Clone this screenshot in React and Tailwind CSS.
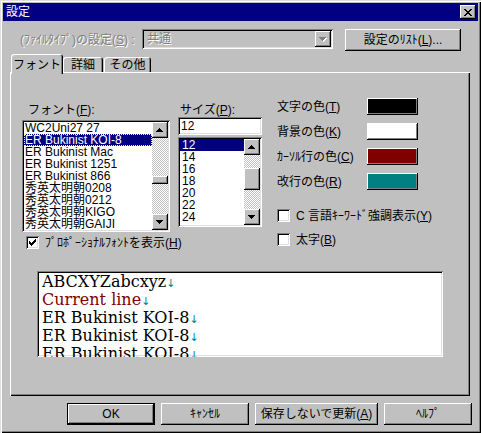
import React from 'react';

const raised = 'shadow-[inset_-1px_-1px_0_#000,inset_1px_1px_0_#fff,inset_-2px_-2px_0_#808080]';
const sunken = 'shadow-[inset_1px_1px_0_#808080,inset_-1px_-1px_0_#fff,inset_2px_2px_0_#000,inset_-2px_-2px_0_#dfdfdf]';
const dither = 'bg-[image:conic-gradient(#fff_25%,#c0c0c0_0_50%,#fff_0_75%,#c0c0c0_0)] bg-[length:2px_2px]';
const grey = 'text-[#808080] [text-shadow:1px_1px_0_#fff]';

const FONTS = [
  'WC2Uni27 27',
  'ER Bukinist KOI-8',
  'ER Bukinist Mac',
  'ER Bukinist 1251',
  'ER Bukinist 866',
  '秀英太明朝0208',
  '秀英太明朝0212',
  '秀英太明朝KIGO',
  '秀英太明朝GAIJI',
];
const SIZES = ['12', '14', '16', '18', '20', '22', '24'];

const COLORS = [
  { label: '文字の色', key: 'T', color: 'bg-black' },
  { label: '背景の色', key: 'K', color: 'bg-white' },
  { label: 'ｶｰｿﾙ行の色', key: 'C', color: 'bg-[#800000]' },
  { label: '改行の色', key: 'R', color: 'bg-[#008080]' },
];

function Arrow({ dir = 'down', disabled }) {
  const d =
    dir === 'up'
      ? 'M3 0h1v1H3zM2 1h3v1H2zM1 2h5v1H1zM0 3h7v1H0z'
      : 'M0 0h7v1H0zM1 1h5v1H1zM2 2h3v1H2zM3 3h1v1H3z';
  return (
    <svg width="8" height="5" viewBox="0 0 8 5" shapeRendering="crispEdges">
      {disabled && <path d={d} fill="#fff" transform="translate(1 1)" />}
      <path d={d} fill={disabled ? '#808080' : '#000'} />
    </svg>
  );
}

function ScrollBtn({ dir, disabled }) {
  return (
    <div className={`w-[16px] h-[16px] shrink-0 bg-[#c0c0c0] ${raised} flex items-center justify-center`}>
      <Arrow dir={dir} disabled={disabled} />
    </div>
  );
}

function ScrollBar({ thumb }) {
  return (
    <div className="w-[16px] flex flex-col">
      <ScrollBtn dir="up" />
      <div className={`flex-1 ${dither}`}>
        <div className={`${thumb} bg-[#c0c0c0] ${raised}`} />
      </div>
      <ScrollBtn dir="down" />
    </div>
  );
}

function Check({ checked }) {
  return (
    <div className={`w-[13px] h-[13px] shrink-0 bg-white ${sunken}`}>
      {checked && (
        <svg width="13" height="13" viewBox="0 0 13 13" shapeRendering="crispEdges">
          <path d="M3 5h1v3H3zM4 6h1v3H4zM5 7h1v3H5zM6 6h1v3H6zM7 5h1v3H7zM8 4h1v3H8zM9 3h1v3H9z" fill="#000" />
        </svg>
      )}
    </div>
  );
}

function Button({ children, w, isDefault }) {
  const frame = isDefault
    ? 'shadow-[inset_0_0_0_1px_#000,inset_-2px_-2px_0_#000,inset_2px_2px_0_#fff,inset_-3px_-3px_0_#808080]'
    : raised;
  return (
    <div className={`${w} h-[22px] bg-[#c0c0c0] ${frame} flex items-center justify-center`}>
      {children}
    </div>
  );
}

export default function App() {
  return (
    <div className="w-[481px] h-[433px] bg-[#c0c0c0] p-[3px] flex flex-col text-[12px] leading-[12px] text-black font-['Liberation_Sans','Noto_Sans_CJK_JP',sans-serif] shadow-[inset_1px_1px_0_#dfdfdf,inset_2px_2px_0_#fff,inset_-1px_-1px_0_#000,inset_-2px_-2px_0_#808080]">
      {/* title bar */}
      <div className="h-[18px] bg-[#000080] flex items-center justify-between pl-[3px] pr-[2px]">
        <span className="text-white">設定</span>
        <div className={`w-[16px] h-[14px] bg-[#c0c0c0] ${raised} flex items-center justify-center`}>
          <svg width="8" height="7" viewBox="0 0 8 7" shapeRendering="crispEdges">
            <path
              d="M0 0h2v1H0zM6 0h2v1H6zM1 1h2v1H1zM5 1h2v1H5zM2 2h4v1H2zM3 3h2v1H3zM2 4h4v1H2zM1 5h2v1H1zM5 5h2v1H5zM0 6h2v1H0zM6 6h2v1H6z"
              fill="#000"
            />
          </svg>
        </div>
      </div>

      {/* file type row */}
      <div className="mt-[8px] h-[22px] flex items-start">
        <span className={`ml-[17px] mt-[5px] w-[122px] whitespace-nowrap ${grey}`}>
          (ﾌｧｲﾙﾀｲﾌﾟ)の設定(<u>S</u>) :
        </span>
        <div className={`w-[191px] h-[20px] bg-[#c0c0c0] ${sunken} flex items-center p-[2px]`}>
          <span className={`flex-1 pl-[3px] ${grey}`}>共通</span>
          <ScrollBtn dir="down" disabled />
        </div>
        <div className="ml-[12px]">
          <Button w="w-[116px]">
            設定のﾘｽﾄ(<u>L</u>)...
          </Button>
        </div>
      </div>

      {/* tabs */}
      <div className="mt-[3px] ml-[7px] h-[18px] flex items-end relative z-10">
        <div className="ml-[1px] w-[52px] h-[20px] mb-[-2px] bg-[#c0c0c0] rounded-t-[3px] shadow-[inset_1px_1px_0_#fff,inset_-1px_0_0_#000,inset_-2px_0_0_#808080] flex justify-center pt-[5px]">
          フォント
        </div>
        <div className="w-[40px] h-[15px] bg-[#c0c0c0] rounded-t-[3px] shadow-[inset_1px_1px_0_#fff,inset_-1px_0_0_#000,inset_-2px_0_0_#808080] flex justify-center pt-[2px]">
          詳細
        </div>
        <div className="ml-[1px] w-[47px] h-[15px] bg-[#c0c0c0] rounded-t-[3px] shadow-[inset_1px_1px_0_#fff,inset_-1px_0_0_#000,inset_-2px_0_0_#808080] flex justify-center pt-[2px]">
          その他
        </div>
      </div>

      {/* tab page */}
      <div className="ml-[7px] w-[460px] h-[324px] shadow-[inset_1px_1px_0_#fff,inset_-1px_-1px_0_#000,inset_-2px_-2px_0_#808080] flex flex-col">
        <div className="h-[177px] flex items-start">
          {/* font list */}
          <div className="ml-[12px] w-[148px] pt-[32px] flex flex-col">
            <span className="pl-[6px] h-[12px]">
              フォント(<u>F</u>):
            </span>
            <div className={`mt-[4px] h-[112px] bg-white ${sunken} p-[2px] flex`}>
              <div className="flex-1 flex flex-col">
                {FONTS.map((f, i) => (
                  <div
                    key={f}
                    className={`h-[12px] shrink-0 pl-[1px] whitespace-nowrap ${
                      i === 1
                        ? 'bg-[#000080] text-white outline-1 outline-dotted outline-[#ffff80] -outline-offset-1'
                        : ''
                    }`}
                  >
                    {f}
                  </div>
                ))}
              </div>
              <ScrollBar thumb="mt-[38px] h-[8px]" />
            </div>
            <div className="mt-[4px] pl-[4px] flex items-center gap-[6px] whitespace-nowrap">
              <Check checked />
              <span>
                ﾌﾟﾛﾎﾟｰｼｮﾅﾙﾌｫﾝﾄを表示(<u>H</u>)
              </span>
            </div>
          </div>

          {/* size list */}
          <div className="ml-[8px] w-[84px] pt-[32px] flex flex-col">
            <span className="pl-[2px] h-[12px]">
              サイズ(<u>P</u>):
            </span>
            <div className={`mt-[1px] h-[18px] bg-white ${sunken} flex items-center pl-[3px]`}>12</div>
            <div className={`mt-[2px] h-[90px] bg-white ${sunken} p-[2px] flex`}>
              <div className="flex-1 flex flex-col">
                {SIZES.map((s, i) => (
                  <div
                    key={s}
                    className={`h-[12px] shrink-0 pl-[2px] ${i === 0 ? 'bg-[#000080] text-white' : ''}`}
                  >
                    {s}
                  </div>
                ))}
              </div>
              <ScrollBar thumb="mt-[13px] h-[22px]" />
            </div>
          </div>

          {/* colours */}
          <div className="ml-[15px] pt-[22px] flex flex-col">
            {COLORS.map((c) => (
              <div key={c.key} className="h-[25px] flex items-center">
                <span className="w-[90px] whitespace-nowrap">
                  {c.label}(<u>{c.key}</u>)
                </span>
                <div className={`w-[51px] h-[17px] bg-[#c0c0c0] ${raised} pt-[1px] pl-[1px] pr-[2px] pb-[2px]`}>
                  <div className={`w-full h-full ${c.color}`} />
                </div>
              </div>
            ))}
            <div className="mt-[15px] h-[13px] flex items-center gap-[6px] whitespace-nowrap">
              <Check />
              <span>
                C 言語ｷｰﾜｰﾄﾞ強調表示(<u>Y</u>)
              </span>
            </div>
            <div className="mt-[11px] h-[13px] flex items-center gap-[6px] whitespace-nowrap">
              <Check />
              <span>
                太字(<u>B</u>)
              </span>
            </div>
          </div>
        </div>

        {/* preview */}
        <div className={`mt-[22px] ml-[27px] w-[406px] h-[86px] bg-white ${sunken} overflow-hidden pl-[5px] pt-[2px]`}>
          <div className="h-[84px] overflow-hidden font-['DejaVu_Serif',serif] text-[16px] leading-[18px]">
            {[
              ['ABCXYZabcxyz', 'text-black'],
              ['Current line', 'text-[#800000]'],
              ['ER Bukinist KOI-8', 'text-black'],
              ['ER Bukinist KOI-8', 'text-black'],
              ['ER Bukinist KOI-8', 'text-black'],
            ].map(([t, col], i) => (
              <div key={i} className={`h-[18px] whitespace-nowrap ${col}`}>
                {t}
                <span className="text-[#008080] text-[11px] font-['DejaVu_Sans',sans-serif]">↓</span>
              </div>
            ))}
          </div>
        </div>
      </div>

      {/* buttons */}
      <div className="mt-[7px] pr-[6px] flex justify-end gap-[6px]">
        <Button w="w-[88px]" isDefault>OK</Button>
        <Button w="w-[88px]">ｷｬﾝｾﾙ</Button>
        <Button w="w-[123px]">
          保存しないで更新(<u>A</u>)
        </Button>
        <Button w="w-[88px]">ﾍﾙﾌﾟ</Button>
      </div>
    </div>
  );
}
